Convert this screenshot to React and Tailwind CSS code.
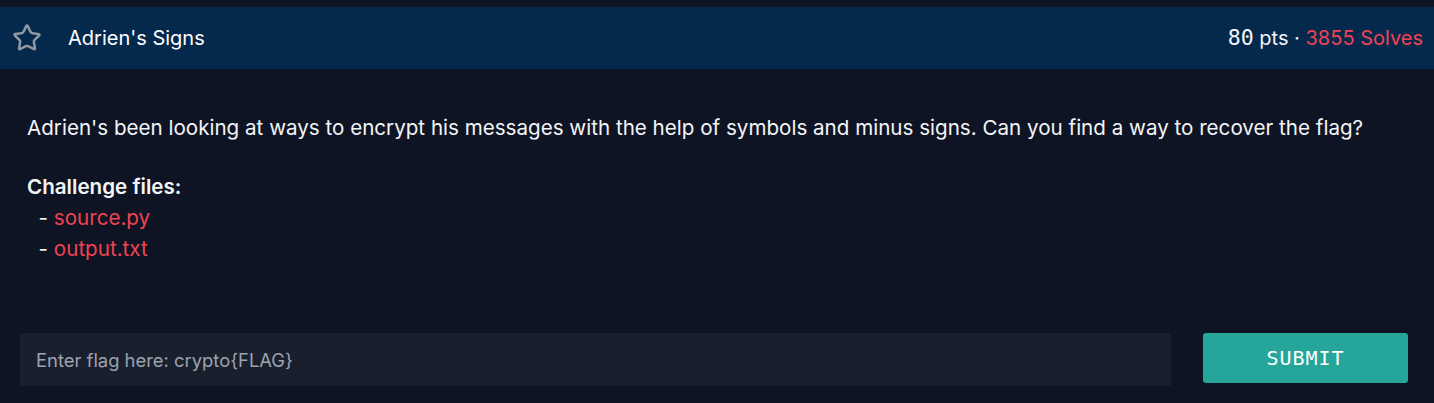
import { Star } from 'lucide-react';

const App = () => {
  return (
    <div className="min-h-[403px] w-full bg-[#0f1424] pt-[7px] font-['Inter','Noto_Sans',sans-serif] text-[#f3f4f6]">
      <div className="flex h-[62px] items-center justify-between bg-[#05294d] pl-[12px] pr-[11px]">
        <div className="flex items-center">
          <Star size={30} strokeWidth={2} className="text-[#8f98a3]" />
          <span className="ml-[26px] text-[20px] text-white">Adrien's Signs</span>
        </div>
        <div className="text-[20px]">
          <span className="font-['DejaVu_Sans_Mono',monospace] text-[21.5px]">80</span>
          <span> pts · </span>
          <span className="text-[#ef4352]">3855 Solves</span>
        </div>
      </div>

      <div className="px-[27px] pt-[43px] text-[20.6px] leading-[31px]">
        <p>Adrien's been looking at ways to encrypt his messages with the help of symbols and minus signs. Can you find a way to recover the flag?</p>
        <p className="mt-[28px] font-semibold">Challenge files:</p>
        <div>&nbsp;&nbsp;- <a className="text-[#ef4352]">source.py</a></div>
        <div>&nbsp;&nbsp;- <a className="text-[#ef4352]">output.txt</a></div>
      </div>

      <div className="mt-[69px] flex items-start gap-[32px] pl-[20px] pr-[26px]">
        <input
          className="h-[53px] flex-1 rounded-[3px] bg-[#1a1f2e] px-[16px] text-[18.4px] text-[#d1d5db] placeholder-[#9ca3af] outline-none"
          placeholder="Enter flag here: crypto{FLAG}"
        />
        <button className="h-[50px] w-[205px] rounded-[3px] bg-[#26a69a] font-['DejaVu_Sans_Mono',monospace] text-[20px] tracking-[1px] text-white">
          SUBMIT
        </button>
      </div>
    </div>
  );
};

export default App;
